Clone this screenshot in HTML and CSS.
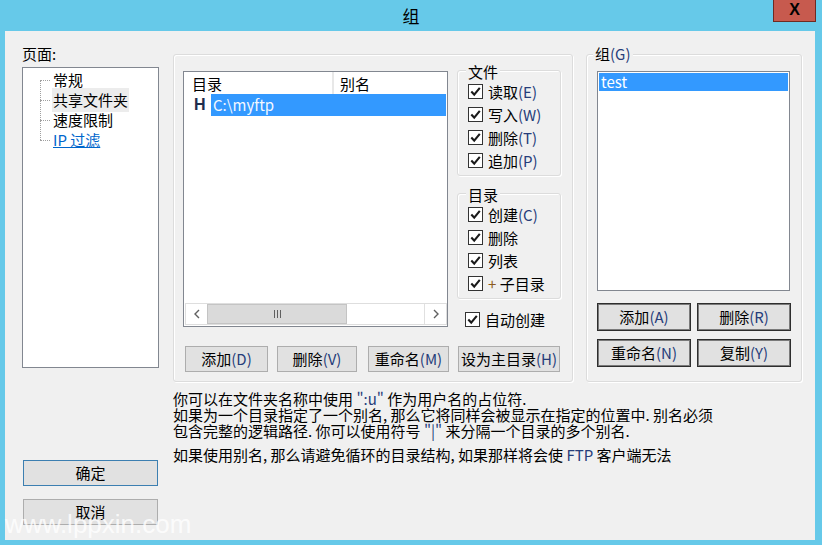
FILE: index.html
```html
<!DOCTYPE html>
<html lang="zh-CN">
<head>
    <meta charset="UTF-8">
    <meta name="viewport" content="width=device-width, initial-scale=1.0">
    <title>组</title>
    <link rel="stylesheet" href="styles.css">
</head>
<body>
    <div class="titlebar">
        <span class="title">组</span>
        <div class="close">X</div>
    </div>
    <div class="window">
        <div class="side">
            <div class="side-label">页面:</div>
            <ul class="tree">
                <li>常规</li>
                <li><span class="tree-sel">共享文件夹</span></li>
                <li>速度限制</li>
                <li><span class="link">IP 过滤</span></li>
            </ul>
            <button class="btn btn-default">确定</button>
            <button class="btn btn-cancel">取消</button>
        </div>
        <div class="main">
            <div class="groups">
                <div class="group mid-group">
                    <div class="mid-top">
                        <div class="listview">
                            <div class="lv-head">
                                <div class="lv-col c1">目录</div>
                                <div class="lv-col c2">别名</div>
                            </div>
                            <div class="lv-body">
                                <div class="lv-row">
                                    <span class="home">H</span>
                                    <span class="lv-sel">C:\myftp</span>
                                </div>
                            </div>
                            <div class="hscroll">
                                <div class="sb-btn">
                                    <svg width="8" height="12" viewBox="0 0 8 12"><path d="M6 2 L2 6 L6 10"/></svg>
                                </div>
                                <div class="sb-thumb"><span></span><span></span><span></span></div>
                                <div class="sb-track"></div>
                                <div class="sb-btn">
                                    <svg width="8" height="12" viewBox="0 0 8 12"><path d="M2 2 L6 6 L2 10"/></svg>
                                </div>
                            </div>
                        </div>
                        <div class="perms">
                            <div class="box files">
                                <div class="box-label">文件</div>
                                <div class="cb"><span class="tick"><svg viewBox="0 0 13 13"><path d="M2.3 6.6 L5.2 9.6 L10.8 2.8"/></svg></span>读取<span class="k">(E)</span></div>
                                <div class="cb"><span class="tick"><svg viewBox="0 0 13 13"><path d="M2.3 6.6 L5.2 9.6 L10.8 2.8"/></svg></span>写入<span class="k">(W)</span></div>
                                <div class="cb"><span class="tick"><svg viewBox="0 0 13 13"><path d="M2.3 6.6 L5.2 9.6 L10.8 2.8"/></svg></span>删除<span class="k">(T)</span></div>
                                <div class="cb"><span class="tick"><svg viewBox="0 0 13 13"><path d="M2.3 6.6 L5.2 9.6 L10.8 2.8"/></svg></span>追加<span class="k">(P)</span></div>
                            </div>
                            <div class="box dirs">
                                <div class="box-label">目录</div>
                                <div class="cb"><span class="tick"><svg viewBox="0 0 13 13"><path d="M2.3 6.6 L5.2 9.6 L10.8 2.8"/></svg></span>创建<span class="k">(C)</span></div>
                                <div class="cb"><span class="tick"><svg viewBox="0 0 13 13"><path d="M2.3 6.6 L5.2 9.6 L10.8 2.8"/></svg></span>删除</div>
                                <div class="cb"><span class="tick"><svg viewBox="0 0 13 13"><path d="M2.3 6.6 L5.2 9.6 L10.8 2.8"/></svg></span>列表</div>
                                <div class="cb"><span class="tick"><svg viewBox="0 0 13 13"><path d="M2.3 6.6 L5.2 9.6 L10.8 2.8"/></svg></span><span class="plus">+</span>&nbsp;子目录</div>
                            </div>
                            <div class="cb auto"><span class="tick"><svg viewBox="0 0 13 13"><path d="M2.3 6.6 L5.2 9.6 L10.8 2.8"/></svg></span>自动创建</div>
                        </div>
                    </div>
                    <div class="mid-buttons">
                        <button class="btn b-add">添加<span class="k">(D)</span></button>
                        <button class="btn b-del">删除<span class="k">(V)</span></button>
                        <button class="btn b-ren">重命名<span class="k">(M)</span></button>
                        <button class="btn b-home">设为主目录<span class="k">(H)</span></button>
                    </div>
                </div>
                <div class="group right-group">
                    <div class="box-label">组<span class="k">(G)</span></div>
                    <div class="listbox">
                        <div class="lb-sel">test</div>
                    </div>
                    <div class="right-buttons">
                        <button class="btn btn-dark">添加<span class="k">(A)</span></button>
                        <button class="btn btn-dark">删除<span class="k">(R)</span></button>
                        <button class="btn btn-dark">重命名<span class="k">(N)</span></button>
                        <button class="btn btn-dark">复制<span class="k">(Y)</span></button>
                    </div>
                </div>
            </div>
            <div class="notes">
                <div class="n1">你可以在文件夹名称中使用 <span class="k">":u"</span> 作为用户名的占位符.</div>
                <div class="n2">如果为一个目录指定了一个别名, 那么它将同样会被显示在指定的位置中. 别名必须<br>包含完整的逻辑路径. 你可以使用符号 <span class="k">"|"</span> 来分隔一个目录的多个别名.</div>
                <div class="n4">如果使用别名, 那么请避免循环的目录结构, 如果那样将会使 <span class="k">FTP</span> 客户端无法</div>
            </div>
        </div>
    </div>
    <div class="watermark">www.lppxin.com</div>
</body>
</html>
```

FILE: styles.css
```css
body {
    margin: 0;
    width: 822px;
    height: 545px;
    overflow: hidden;
    position: relative;
    background-color: #66c9e9;
    font-family: "Noto Sans CJK SC", "Noto Sans", sans-serif;
    font-size: 15px;
    color: #000;
}
.titlebar {
    height: 31px;
    display: flex;
    justify-content: center;
    align-items: center;
}
.title {
    font-size: 17px;
    line-height: 20px;
}
.close {
    position: absolute;
    top: 0;
    right: 6px;
    width: 41px;
    height: 21px;
    background-color: #c75a4e;
    border: 1px solid #6e2a22;
    border-top: none;
    color: #000;
    font-family: "Liberation Sans", Arial, sans-serif;
    font-weight: bold;
    font-size: 16px;
    line-height: 20px;
    text-align: center;
}
.window {
    margin-left: 5px;
    width: 810px;
    height: 509px;
    background-color: #f0f0f0;
    display: flex;
}
.side {
    width: 168px;
    box-sizing: border-box;
    padding: 15px 0 0 17px;
    display: flex;
    flex-direction: column;
    align-items: flex-start;
}
.side-label {
    line-height: 16px;
    margin-bottom: 5px;
}
.tree {
    list-style: none;
    margin: 0;
    padding: 2px 0 0 0;
    width: 137px;
    height: 301px;
    box-sizing: border-box;
    border: 1px solid #828790;
    background-color: #fff;
}
.tree li {
    position: relative;
    height: 20px;
    line-height: 20px;
    padding-left: 30px;
}
.tree li::before {
    content: "";
    position: absolute;
    left: 17px;
    top: -10px;
    height: 20px;
    border-left: 1px dotted #a0a0a0;
}
.tree li:first-child::before {
    display: none;
}
.tree li::after {
    content: "";
    position: absolute;
    left: 17px;
    top: 10px;
    width: 10px;
    border-top: 1px dotted #a0a0a0;
}
.tree-sel {
    background-color: #ececec;
    padding: 1px 1px 2px 1px;
    margin-left: -1px;
}
.link {
    color: #0066cc;
    text-decoration: underline;
}
.btn {
    font-family: inherit;
    font-size: 15px;
    color: #000;
    background-color: #e1e1e1;
    border: 1px solid #adadad;
    height: 26px;
    padding: 0;
    margin: 0;
    line-height: 22px;
    white-space: nowrap;
}
.btn-default {
    border-color: #3c7fb1;
    width: 135px;
    margin: 92px 0 0 1px;
}
.btn-cancel {
    width: 135px;
    margin: 13px 0 0 1px;
}
.k {
    color: #263d7a;
}
.main {
    flex: 1;
    padding-top: 23px;
}
.groups {
    display: flex;
    gap: 13px;
}
.group {
    box-sizing: border-box;
    height: 328px;
    border: 1px solid #dcdcdc;
    border-radius: 3px;
    box-shadow: inset 1px 1px 0 #fff, 1px 1px 0 #fff;
}
.mid-group {
    width: 400px;
    padding: 16px 0 0 9px;
}
.mid-top {
    display: flex;
    gap: 9px;
}
.listview {
    width: 265px;
    height: 256px;
    box-sizing: border-box;
    border: 1px solid #828790;
    background-color: #fff;
    display: flex;
    flex-direction: column;
}
.lv-head {
    height: 22px;
    display: flex;
    line-height: 24px;
}
.lv-col.c1 {
    width: 150px;
    padding-left: 8px;
    box-sizing: border-box;
    border-right: 2px solid #e8e8e8;
}
.lv-col.c2 {
    padding-left: 6px;
}
.lv-row {
    height: 22px;
    display: flex;
    align-items: center;
}
.home {
    width: 27px;
    box-sizing: border-box;
    padding-left: 10px;
    font-family: "Liberation Sans", Arial, sans-serif;
    font-weight: bold;
    font-size: 16px;
    color: #1f2d4d;
}
.lv-sel {
    flex: 1;
    margin-right: 1px;
    height: 22px;
    line-height: 22px;
    padding-left: 2px;
    background-color: #3399ff;
    color: #f4f8ff;
}
.lv-body {
    flex: 1;
}
.hscroll {
    height: 22px;
    display: flex;
    margin: 0 0 1px 1px;
    border: 1px solid #dedede;
    box-sizing: border-box;
}
.sb-btn {
    width: 21px;
    display: flex;
    align-items: center;
    justify-content: center;
    background-color: #fff;
}
.sb-btn svg path {
    fill: none;
    stroke: #606060;
    stroke-width: 1.4;
}
.sb-thumb {
    width: 140px;
    box-sizing: border-box;
    background-color: #dadada;
    border: 1px solid #c4c4c4;
    display: flex;
    justify-content: center;
    align-items: center;
    gap: 2px;
}
.sb-thumb span {
    width: 1px;
    height: 8px;
    background-color: #606060;
}
.sb-track {
    flex: 1;
    background-color: #fff;
    border-right: 1px solid #e0e0e0;
}
.perms {
    width: 104px;
    display: flex;
    flex-direction: column;
}
.box {
    border: 1px solid #dcdcdc;
    border-radius: 3px;
    box-shadow: inset 1px 1px 0 #fff, 1px 1px 0 #fff;
    padding: 0 0 3px 10px;
    display: flex;
    flex-direction: column;
}
.box-label {
    align-self: flex-start;
    margin: -7px 0 0 -2px;
    padding: 0 2px;
    background-color: #f0f0f0;
    line-height: 16px;
}
.files {
    margin-top: -1px;
}
.dirs {
    margin-top: 17px;
}
.cb {
    height: 23px;
    display: flex;
    align-items: center;
    white-space: nowrap;
}
.tick {
    width: 15px;
    height: 15px;
    box-sizing: border-box;
    border: 1px solid #333;
    background-color: #fff;
    margin-right: 5px;
    display: flex;
}
.tick svg {
    width: 13px;
    height: 13px;
}
.tick path {
    fill: none;
    stroke: #1a1a1a;
    stroke-width: 2.1;
}
.plus {
    color: #8a5a20;
}
.auto {
    margin: 9px 0 0 8px;
}
.mid-buttons {
    display: flex;
    margin-top: 15px;
}
.b-add {
    width: 83px;
    margin-left: 2px;
}
.b-del {
    width: 80px;
    margin-left: 9px;
}
.b-ren {
    width: 81px;
    margin-left: 11px;
}
.b-home {
    width: 102px;
    margin-left: 9px;
}
.right-group {
    width: 216px;
    padding-left: 10px;
    display: flex;
    flex-direction: column;
}
.right-group .box-label {
    margin: -9px 0 0 -4px;
}
.listbox {
    margin-top: 9px;
    width: 193px;
    height: 220px;
    box-sizing: border-box;
    border: 1px solid #828790;
    background-color: #fff;
    padding: 1px;
}
.lb-sel {
    height: 18px;
    line-height: 18px;
    padding-left: 2px;
    background-color: #3399ff;
    color: #fff;
}
.right-buttons {
    margin-top: 12px;
    display: grid;
    grid-template-columns: 94px 94px;
    column-gap: 6px;
    row-gap: 8px;
}
.btn-dark {
    height: 28px;
    border: 1px solid #2e2e2e;
    box-shadow: inset 0 0 0 1px #7a7a7a;
}
.notes {
    margin-top: 9px;
    white-space: nowrap;
}
.n1 {
    line-height: 16px;
}
.n2 {
    line-height: 16px;
}
.n4 {
    margin-top: 8px;
    line-height: 16px;
}
.watermark {
    position: absolute;
    left: 5px;
    top: 511px;
    font-family: "Liberation Sans", Arial, sans-serif;
    font-size: 26px;
    line-height: 26px;
    color: rgba(255, 255, 255, 0.8);
}
```
